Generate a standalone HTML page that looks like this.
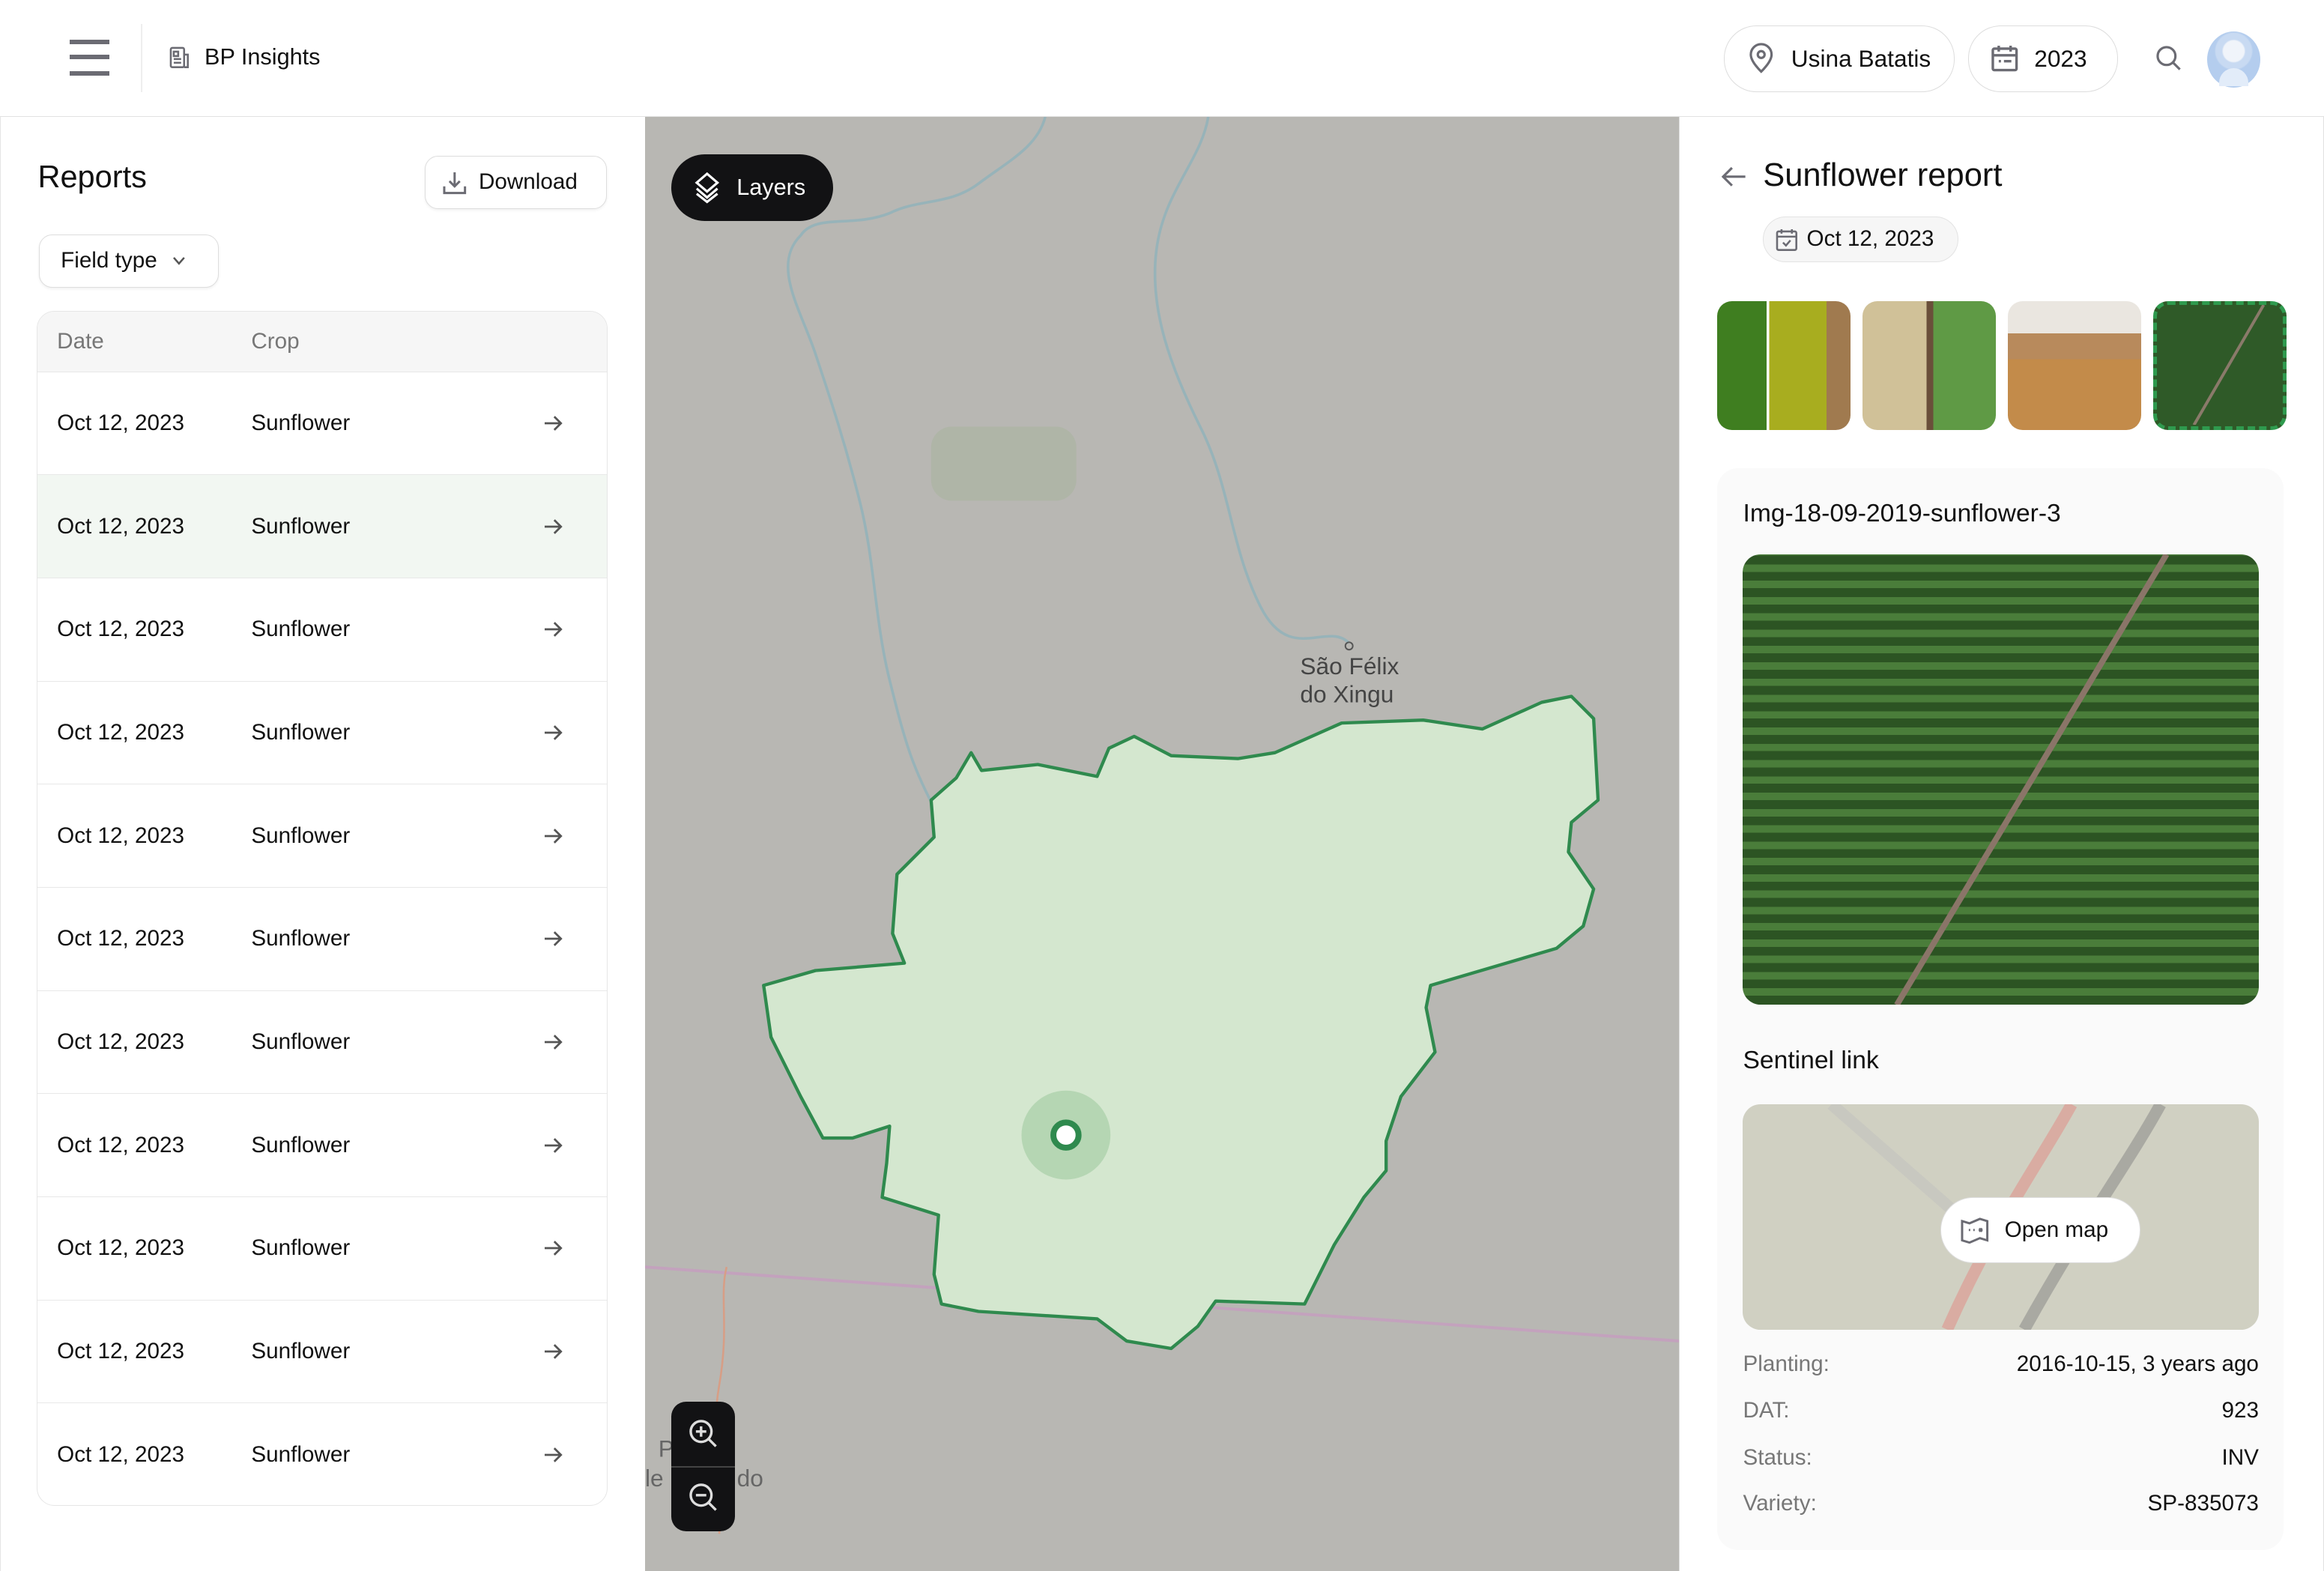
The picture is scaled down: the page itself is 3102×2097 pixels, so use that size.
<!DOCTYPE html>
<html><head><meta charset="utf-8"><style>
*{box-sizing:border-box;margin:0;padding:0}
html,body{width:3102px;height:2097px;overflow:hidden;background:#fff}
#r{width:1568px;height:1060px;zoom:1.978316;position:relative;font-family:"Liberation Sans",sans-serif;color:#111;overflow:hidden}
.abs{position:absolute}
.hdr{left:0;top:0;width:1568px;height:79px;background:#fff;border-bottom:1px solid #e2e2e2}
.pill{position:absolute;border:1px solid #ddd;border-radius:22px;background:#fff;display:flex;align-items:center;font-size:16px}
.left{left:0;top:79px;width:435px;height:981px;background:#fff;border-left:1px solid #e5e5e5}
.btn{position:absolute;border:1px solid #ddd;border-radius:9px;background:#fff;display:flex;align-items:center;font-size:15px;box-shadow:0 1px 2px rgba(0,0,0,.06)}
.tbl{left:25px;top:210px;width:385px;height:806px;border:1px solid #e6e6e6;border-radius:12px;overflow:hidden;background:#fff}
.th{height:40px;background:#f6f6f6;font-size:15px;color:#777;position:relative}
.row{height:69.6px;border-top:1px solid #e8e8e8;position:relative;font-size:15px}
.row span,.th span,.row svg{position:absolute;top:50%;transform:translateY(-50%)}
.map{left:435px;top:79px;width:698px;height:981px;background:#b8b7b3;overflow:hidden}
.right{left:1133px;top:79px;width:435px;height:981px;background:#fff;border-left:1px solid #e0e0e0;border-right:1px solid #e0e0e0}
.kv{position:absolute;left:1176px;width:348px;font-size:15px;display:flex;justify-content:space-between}
.kv b{font-weight:normal;color:#777}
</style></head><body><div id="r">

<div class="abs hdr">
  <div class="abs" style="left:47px;top:27px;width:27px;height:3px;background:#6b6b73"></div>
  <div class="abs" style="left:47px;top:37px;width:27px;height:3px;background:#6b6b73"></div>
  <div class="abs" style="left:47px;top:48px;width:27px;height:3px;background:#6b6b73"></div>
  <div class="abs" style="left:95px;top:16px;width:1px;height:46px;background:#eee"></div>
  <svg class="abs" style="left:113px;top:31px" width="16" height="16" viewBox="0 0 16 16" fill="none" stroke="#6b6b73" stroke-width="1.3"><rect x="2" y="1.5" width="9" height="13" rx="1"/><path d="M11 6h2.5v8.5H11M4 4h3v3H4zM4 9h5M4 11.5h5"/></svg>
  <div class="abs" style="left:138px;top:30px;font-size:15.5px">BP Insights</div>
  <div class="pill" style="left:1163px;top:17px;width:156px;height:45px;padding-left:15px"><svg width="20" height="22" viewBox="0 0 20 22" fill="none" stroke="#6b6b73" stroke-width="1.6"><path d="M10 20s-7-6.5-7-11.5a7 7 0 0114 0C17 13.5 10 20 10 20z"/><circle cx="10" cy="8.5" r="2.3"/></svg><span style="margin-left:10px">Usina Batatis</span></div>
  <div class="pill" style="left:1328px;top:17px;width:101px;height:45px;padding-left:14px"><svg width="20" height="20" viewBox="0 0 20 20" fill="none" stroke="#6b6b73" stroke-width="1.7"><rect x="2" y="3.5" width="16" height="14.5" rx="1"/><path d="M2 8h16M6 1.5v4M14 1.5v4M6 12h1.5M9.5 12h5"/></svg><span style="margin-left:10px">2023</span></div>
  <svg class="abs" style="left:1454px;top:30px" width="19" height="19" viewBox="0 0 19 19" fill="none" stroke="#6b6b73" stroke-width="1.6"><circle cx="8" cy="8" r="6"/><path d="M12.5 12.5l4.5 4.5"/></svg>
  <div class="abs" style="left:1489px;top:21px;width:36px;height:38px;border-radius:50%;background:radial-gradient(circle at 50% 35%,#f0f4fa 0 7px,#c8daf2 8px 12px,#b4cdee 13px);"></div>
  <div class="abs" style="left:1497px;top:46px;width:20px;height:12px;border-radius:10px 10px 0 0;background:#e2ecf9"></div>
</div>

<div class="abs left">
  <div class="abs" style="left:25px;top:28px;font-size:21px">Reports</div>
  <div class="btn" style="left:286px;top:26px;width:123px;height:36px;padding-left:11px"><svg width="17" height="17" viewBox="0 0 17 17" fill="none" stroke="#6b6b73" stroke-width="1.5"><path d="M8.5 1.5v9M5 7.5l3.5 3.5L12 7.5M1.5 11v4.5h14V11"/></svg><span style="margin-left:8px">Download</span></div>
  <div class="btn" style="left:26px;top:79px;width:121px;height:36px;padding-left:14px"><span>Field type</span><svg style="margin-left:10px" width="10" height="8" viewBox="0 0 10 8" fill="none" stroke="#555" stroke-width="1.3"><path d="M1.5 2l3.5 4 3.5-4"/></svg></div>
</div>
<div class="abs tbl">
  <div class="th"><span style="left:13px">Date</span><span style="left:144px">Crop</span></div>
  <div class="row"><span style="left:13px">Oct 12, 2023</span><span style="left:144px">Sunflower</span><svg style="left:341px" width="14" height="12" viewBox="0 0 14 12" fill="none" stroke="#555" stroke-width="1.4"><path d="M1 6h11M7.5 1.5L12 6l-4.5 4.5"/></svg></div>
  <div class="row" style="background:#f2f7f2"><span style="left:13px">Oct 12, 2023</span><span style="left:144px">Sunflower</span><svg style="left:341px" width="14" height="12" viewBox="0 0 14 12" fill="none" stroke="#555" stroke-width="1.4"><path d="M1 6h11M7.5 1.5L12 6l-4.5 4.5"/></svg></div>
  <div class="row"><span style="left:13px">Oct 12, 2023</span><span style="left:144px">Sunflower</span><svg style="left:341px" width="14" height="12" viewBox="0 0 14 12" fill="none" stroke="#555" stroke-width="1.4"><path d="M1 6h11M7.5 1.5L12 6l-4.5 4.5"/></svg></div>
  <div class="row"><span style="left:13px">Oct 12, 2023</span><span style="left:144px">Sunflower</span><svg style="left:341px" width="14" height="12" viewBox="0 0 14 12" fill="none" stroke="#555" stroke-width="1.4"><path d="M1 6h11M7.5 1.5L12 6l-4.5 4.5"/></svg></div>
  <div class="row"><span style="left:13px">Oct 12, 2023</span><span style="left:144px">Sunflower</span><svg style="left:341px" width="14" height="12" viewBox="0 0 14 12" fill="none" stroke="#555" stroke-width="1.4"><path d="M1 6h11M7.5 1.5L12 6l-4.5 4.5"/></svg></div>
  <div class="row"><span style="left:13px">Oct 12, 2023</span><span style="left:144px">Sunflower</span><svg style="left:341px" width="14" height="12" viewBox="0 0 14 12" fill="none" stroke="#555" stroke-width="1.4"><path d="M1 6h11M7.5 1.5L12 6l-4.5 4.5"/></svg></div>
  <div class="row"><span style="left:13px">Oct 12, 2023</span><span style="left:144px">Sunflower</span><svg style="left:341px" width="14" height="12" viewBox="0 0 14 12" fill="none" stroke="#555" stroke-width="1.4"><path d="M1 6h11M7.5 1.5L12 6l-4.5 4.5"/></svg></div>
  <div class="row"><span style="left:13px">Oct 12, 2023</span><span style="left:144px">Sunflower</span><svg style="left:341px" width="14" height="12" viewBox="0 0 14 12" fill="none" stroke="#555" stroke-width="1.4"><path d="M1 6h11M7.5 1.5L12 6l-4.5 4.5"/></svg></div>
  <div class="row"><span style="left:13px">Oct 12, 2023</span><span style="left:144px">Sunflower</span><svg style="left:341px" width="14" height="12" viewBox="0 0 14 12" fill="none" stroke="#555" stroke-width="1.4"><path d="M1 6h11M7.5 1.5L12 6l-4.5 4.5"/></svg></div>
  <div class="row"><span style="left:13px">Oct 12, 2023</span><span style="left:144px">Sunflower</span><svg style="left:341px" width="14" height="12" viewBox="0 0 14 12" fill="none" stroke="#555" stroke-width="1.4"><path d="M1 6h11M7.5 1.5L12 6l-4.5 4.5"/></svg></div>
  <div class="row"><span style="left:13px">Oct 12, 2023</span><span style="left:144px">Sunflower</span><svg style="left:341px" width="14" height="12" viewBox="0 0 14 12" fill="none" stroke="#555" stroke-width="1.4"><path d="M1 6h11M7.5 1.5L12 6l-4.5 4.5"/></svg></div>
</div>

<div class="abs map">
<svg width="698" height="981" viewBox="435 79 698 981" style="position:absolute;left:0;top:0">
  <g fill="none" stroke="#8fb2ba" stroke-width="1.8" opacity=".8">
    <path d="M705 79c-5 20-25 30-45 45s-40 10-60 20c-25 10-50 0-60 15-20 20 0 50 10 80s20 60 30 100 10 80 20 120 15 60 35 95"/>
    <path d="M815 79c-5 30-30 50-35 90s10 80 30 120 20 80 40 120 45 10 60 25"/>
    <path d="M830 515c-15 30-25 60-30 100s10 60 15 90 20 50 45 80"/>
  </g>
  <rect x="628" y="288" width="98" height="50" rx="14" fill="#a8b49f" opacity=".6"/>
  <path d="M435 855L1133 905" stroke="#c3a2bd" stroke-width="2"/>
  <path d="M490 855c-5 20 2 40-5 80s5 60 0 100" stroke="#d79e86" stroke-width="1.3" fill="none"/>
  <path d="M655 508L662 520L700 516L740 524L748 505L765 497L790 510L835 512L860 508L905 488L960 486L1000 492L1040 474L1060 470L1075 485L1078 540L1060 555L1058 575L1075 600L1068 625L1050 640L965 665L962 680L968 710L945 740L935 770L935 790L920 808L900 840L880 880L820 878L808 895L790 910L760 905L740 890L660 885L635 880L630 860L633 820L595 808L598 785L600 760L575 768L555 768L540 740L520 700L515 665L550 655L610 650L602 630L605 590L630 565L628 540L645 525Z" fill="#d4e7cf" stroke="#2f8a4e" stroke-width="2.2" stroke-linejoin="round"/>
  <circle cx="719" cy="766" r="30" fill="#b5d6b3"/>
  <circle cx="719" cy="766" r="8.5" fill="#fff" stroke="#2f8a4e" stroke-width="4"/>
  <text x="877" y="455" font-size="16" fill="#444" font-family="Liberation Sans">São Félix</text>
  <text x="877" y="474" font-size="16" fill="#444" font-family="Liberation Sans">do Xingu</text>
  <circle cx="910" cy="436" r="2.5" fill="none" stroke="#555"/>
  <text x="444" y="983" font-size="16" fill="#666" font-family="Liberation Sans">P</text>
  <text x="435" y="1003" font-size="16" fill="#666" font-family="Liberation Sans">le</text>
  <text x="497" y="1003" font-size="16" fill="#666" font-family="Liberation Sans">do</text>
</svg>
  <div class="abs" style="left:18px;top:25px;width:109px;height:45px;border-radius:23px;background:#121214;color:#fff;font-size:15.5px;display:flex;align-items:center;padding-left:14px"><svg width="20" height="22" viewBox="0 0 20 22" fill="none" stroke="#fff" stroke-width="1.6"><path d="M10 2l7 6-7 6-7-6z"/><path d="M3 12l7 6 7-6"/><path d="M3 15.5l7 5.5 7-5.5"/></svg><span style="margin-left:10px">Layers</span></div>
  <div class="abs" style="left:18px;top:867px;width:43px;height:87px;border-radius:10px;background:#121214">
    <svg class="abs" style="left:11px;top:11px" width="22" height="22" viewBox="0 0 22 22" fill="none" stroke="#ddd" stroke-width="1.7"><circle cx="9" cy="9" r="7"/><path d="M14 14l5 5M9 5.5v7M5.5 9h7"/></svg>
    <div class="abs" style="left:0;top:43px;width:43px;height:1px;background:#444"></div>
    <svg class="abs" style="left:11px;top:54px" width="22" height="22" viewBox="0 0 22 22" fill="none" stroke="#ddd" stroke-width="1.7"><circle cx="9" cy="9" r="7"/><path d="M14 14l5 5M5.5 9h7"/></svg>
  </div>
</div>

<div class="abs right">
  <svg class="abs" style="left:27px;top:32px" width="18" height="16" viewBox="0 0 18 16" fill="none" stroke="#6b6b73" stroke-width="1.6"><path d="M17 8H2M8 2L2 8l6 6"/></svg>
  <div class="abs" style="left:56px;top:27px;font-size:22px">Sunflower report</div>
  <div class="abs" style="left:56px;top:67px;width:132px;height:31px;border:1px solid #e3e3e3;border-radius:16px;background:#f6f6f6;display:flex;align-items:center;padding-left:8px;font-size:15px"><svg width="15" height="16" viewBox="0 0 15 16" fill="none" stroke="#6b6b73" stroke-width="1.3"><rect x="1" y="2.5" width="13" height="12.5" rx="1"/><path d="M1 6h13M4 1v3M11 1v3M5 10l2 2 3-3.5"/></svg><span style="margin-left:6px">Oct 12, 2023</span></div>
  <div class="abs" style="left:25px;top:124px;width:90px;height:87px;border-radius:10px;background:linear-gradient(90deg,#3f7e20 0 37%,#fff 37% 39%,#a8ad1f 39% 82%,#a07a4f 82%)"></div>
  <div class="abs" style="left:123px;top:124px;width:90px;height:87px;border-radius:10px;background:linear-gradient(90deg,#d0c198 0 48%,#6a4f3a 48% 53%,#5f9a45 53%)"></div>
  <div class="abs" style="left:221px;top:124px;width:90px;height:87px;border-radius:10px;background:linear-gradient(180deg,#eae6e0 0 25%,#b88a5c 25% 45%,#c38b4a 45%)"></div>
  <div class="abs" style="left:319px;top:124px;width:90px;height:87px;border-radius:10px;border:3px dashed #2f9a4e;background:#2f5a28;overflow:hidden"><svg width="84" height="81" style="position:absolute;left:0;top:0"><line x1="25" y1="81" x2="72" y2="0" stroke="#8a7a6a" stroke-width="2"/></svg></div>
  <div class="abs" style="left:25px;top:237px;width:382px;height:730px;border-radius:14px;background:#fafafa"></div>
</div>
<div class="abs" style="left:1176px;top:337px;font-size:17px">Img-18-09-2019-sunflower-3</div>
<div class="abs" style="left:1176px;top:374px;width:348px;height:304px;border-radius:12px;overflow:hidden;background:repeating-linear-gradient(0deg,#2c5423 0 6px,#4a7d3a 6px 11px)">
  <svg width="348" height="304" style="position:absolute;left:0;top:0"><line x1="104" y1="304" x2="286" y2="0" stroke="#8a7568" stroke-width="4"/></svg>
</div>
<div class="abs" style="left:1176px;top:706px;font-size:17px">Sentinel link</div>
<div class="abs" style="left:1176px;top:745px;width:348px;height:152px;border-radius:12px;overflow:hidden;background:#d0d0c2">
  <svg width="348" height="152" style="position:absolute;left:0;top:0"><line x1="60" y1="0" x2="140" y2="70" stroke="#c8c8c0" stroke-width="8"/><path d="M138 152C170 80 200 40 222 0" stroke="#d9aca2" stroke-width="8" fill="none"/><path d="M190 152C230 80 260 40 282 0" stroke="#a9a9a2" stroke-width="8" fill="none"/></svg>
  <div class="abs" style="left:133px;top:63px;width:135px;height:44px;border-radius:22px;background:#fff;border:1px solid #ddd;display:flex;align-items:center;padding-left:13px;font-size:15px"><svg width="20" height="18" viewBox="0 0 20 18" fill="none" stroke="#6b6b73" stroke-width="1.5"><path d="M1.5 3l5 1.5 7-3 5 1.5v13l-5-1.5-7 3-5-1.5z"/><path d="M6 9h1M9 9h1M13 8l2 2M15 8l-2 2"/></svg><span style="margin-left:10px">Open map</span></div>
</div>
<div class="kv" style="top:912px"><b>Planting:</b><span>2016-10-15, 3 years ago</span></div>
<div class="kv" style="top:943px"><b>DAT:</b><span>923</span></div>
<div class="kv" style="top:975px"><b>Status:</b><span>INV</span></div>
<div class="kv" style="top:1006px"><b>Variety:</b><span>SP-835073</span></div>

</div></body></html>
